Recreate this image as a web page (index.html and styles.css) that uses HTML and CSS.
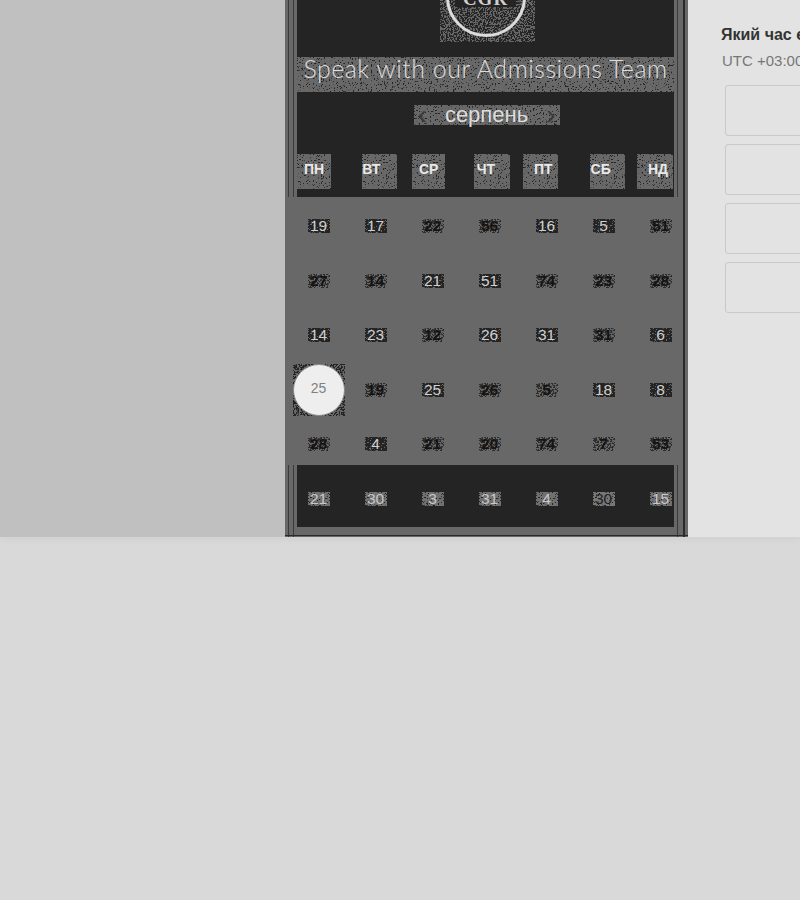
FILE: index.html
```html
<!DOCTYPE html>
<html lang="uk">
<head>
<meta charset="utf-8">
<title>Admissions</title>
<link rel="stylesheet" href="styles.css">
</head>
<body>
<svg class="defs" width="0" height="0" aria-hidden="true">
  <filter id="speckle" x="0" y="0" width="100%" height="100%" color-interpolation-filters="sRGB">
    <feTurbulence type="fractalNoise" baseFrequency="0.62" numOctaves="2" seed="4" result="n"/>
    <feColorMatrix in="n" type="matrix" values="0 0 0 0 0  0 0 0 0 0  0 0 0 0 0  14 0 0 0 -4.4" result="m"/>
    <feComposite in="SourceGraphic" in2="m" operator="in"/>
  </filter>
  <filter id="sparse" x="0" y="0" width="100%" height="100%" color-interpolation-filters="sRGB">
    <feTurbulence type="fractalNoise" baseFrequency="0.62" numOctaves="2" seed="9" result="n"/>
    <feColorMatrix in="n" type="matrix" values="0 0 0 0 0  0 0 0 0 0  0 0 0 0 0  14 0 0 0 -6.6" result="m"/>
    <feComposite in="SourceGraphic" in2="m" operator="in"/>
  </filter>
</svg>
<main class="stage">
  <aside class="side"></aside>
  <section class="cal">
    <header class="cal-head">
      <div class="logo"><span class="logo-text">CGR</span></div>
      <h1 class="title">Speak with our Admissions Team</h1>
      <div class="month">
        <span class="arrow">‹</span>
        <span class="month-name">серпень</span>
        <span class="arrow">›</span>
      </div>
      <div class="weekdays">
        <span class="wd">ПН</span><span class="wd">ВТ</span><span class="wd">СР</span><span class="wd">ЧТ</span><span class="wd">ПТ</span><span class="wd">СБ</span><span class="wd">НД</span>
      </div>
    </header>
    <div class="cal-body days">
      <span class="chip lt">19</span><span class="chip lt">17</span><span class="chip dk">22</span><span class="chip dk">56</span><span class="chip lt">16</span><span class="chip lt">5</span><span class="chip dk">51</span>
      <span class="chip dk">27</span><span class="chip dk">14</span><span class="chip lt">21</span><span class="chip lt">51</span><span class="chip dk">74</span><span class="chip dk">23</span><span class="chip dk">28</span>
      <span class="chip lt">14</span><span class="chip lt">23</span><span class="chip dk">12</span><span class="chip lt">26</span><span class="chip lt">31</span><span class="chip dk">31</span><span class="chip lt">6</span>
      <span class="sel">25</span><span class="chip dk">19</span><span class="chip lt">25</span><span class="chip dk">26</span><span class="chip dk">5</span><span class="chip lt">18</span><span class="chip lt">8</span>
      <span class="chip dk">28</span><span class="chip lt">4</span><span class="chip dk">21</span><span class="chip dk">20</span><span class="chip dk">74</span><span class="chip dk">7</span><span class="chip dk">53</span>
    </div>
    <div class="cal-foot days">
      <span class="chip fl">21</span><span class="chip fl">30</span><span class="chip fl">3</span><span class="chip fl">31</span><span class="chip fl">4</span><span class="chip fd">30</span><span class="chip fl">15</span>
    </div>
  </section>
  <section class="panel">
    <h2 class="q">Який час є найкращим для вас?</h2>
    <p class="tz">UTC +03:00</p>
    <div class="slots">
      <div class="slot"></div>
      <div class="slot"></div>
      <div class="slot"></div>
      <div class="slot"></div>
    </div>
  </section>
</main>
</body>
</html>
```
FILE: styles.css
```css
* { box-sizing: border-box; }
html, body { margin: 0; height: 100%; }
body {
  background: #d9d9d9;
  font-family: "Liberation Sans", Arial, sans-serif;
  overflow: hidden;
}
.defs { position: absolute; }
.stage {
  display: flex;
  height: 537px;
  overflow: hidden;
  box-shadow: 0 3px 6px rgba(0, 0, 0, .04);
}
.side {
  width: 285px;
  flex: none;
  background: #c0c0c0;
}
.cal {
  width: 403px;
  flex: none;
  background: #686868;
}

/* head */
.cal-head {
  position: relative;
  z-index: 0;
  height: 197px;
  display: flex;
  flex-direction: column;
  align-items: center;
  margin: 0;
  padding: 0 14px 8px 12px;
  background:
    linear-gradient(#242424, #242424) 12px 0 / 377px 100% no-repeat,
    linear-gradient(90deg, #686868 3px, #3a3a3a 3px, #3a3a3a 4px, #686868 4px, #686868 8px, #3a3a3a 8px, #3a3a3a 9px, #686868 9px, #686868 392px, #3a3a3a 392px, #3a3a3a 393px, #686868 393px, #686868 398px, #2a2a2a 398px, #2a2a2a 400px, #686868 400px);
}
.logo {
  position: relative;
  width: 80px;
  height: 80px;
  margin-top: -43px;
  flex: none;
  border: 3px solid #dcdcdc;
  border-radius: 50%;
  display: flex;
  justify-content: center;
  align-items: flex-end;
  padding-bottom: 27px;
}
.logo::before {
  content: "";
  position: absolute;
  z-index: -1;
  inset: 30px -12px -8px -9px;
  background: #686868;
  filter: url(#sparse);
}
.logo-text {
  font: bold 19px/16px "Liberation Serif", serif;
  color: #cfcfcf;
  letter-spacing: 1px;
  padding: 0 8px;
  background: #242424;
}
.title {
  position: relative;
  width: 100%;
  height: 35px;
  margin: 20px 0 0;
  font: 300 25px/23px Lato, sans-serif;
  letter-spacing: .5px;
  color: #dcdcdc;
  text-align: center;
  white-space: nowrap;
}
.title::before,
.wd::before,
.month::before {
  content: "";
  position: absolute;
  z-index: -1;
  inset: 0;
  background: #686868;
  filter: url(#speckle);
}
.month {
  position: relative;
  width: 146px;
  height: 20px;
  margin: 13px 0 0 2px;
  display: flex;
  justify-content: space-between;
  align-items: center;
  padding: 0 4px;
}
.month-name {
  font-size: 22px;
  line-height: 20px;
  color: #dcdcdc;
}
.arrow {
  font-size: 28px;
  line-height: 18px;
  color: #3a3a3a;
}
.weekdays {
  width: 100%;
  margin-top: 29px;
  display: flex;
  gap: 23.33px;
}
.wd {
  position: relative;
  flex: none;
  width: 34px;
  height: 35px;
  text-align: center;
  font-size: 14px;
  font-weight: bold;
  line-height: 30px;
  color: #e8e8e8;
}
.wd:nth-child(2)::before { left: 8px; right: -9px; }
.wd:nth-child(3)::before { right: 1px; }
.wd:nth-child(4)::before { left: 5px; right: -7px; }
.wd:nth-child(5)::before { left: -3px; right: 2px; }
.wd:nth-child(6)::before { left: 6px; right: -7px; }
.wd:nth-child(7)::before { left: -4px; right: 2px; }

/* days */
.days {
  display: grid;
  grid-template-columns: repeat(7, 57px);
  justify-items: center;
  align-items: center;
  padding-left: 5px;
}
.cal-body {
  position: relative;
  z-index: 0;
  height: 268px;
  padding-top: 22px;
  row-gap: 40.5px;
  align-content: start;
  background: linear-gradient(90deg, #686868 398px, #2a2a2a 398px, #2a2a2a 400px, #686868 400px);
}
.chip {
  position: relative;
  z-index: 0;
  width: 22px;
  height: 14px;
  font-size: 15.5px;
  line-height: 14px;
  text-align: center;
}
.chip::before {
  content: "";
  position: absolute;
  z-index: -1;
  inset: 0;
  filter: url(#speckle);
}
.lt { color: #d0d0d0; }
.lt::before { background: #242424; }
.dk { color: #141414; font-weight: bold; }
.dk::before { background: #2c2c2c; filter: url(#sparse); }
.fl { color: #c8c8c8; }
.fl::before { background: #707070; }
.fd { color: #242424; }
.fd::before { background: #777; }
.sel {
  position: relative;
  width: 52px;
  height: 52px;
  margin: -19px 0;
  border: 1px solid #8a8a8a;
  border-radius: 50%;
  background: #eeeeee;
  color: #808080;
  font-size: 14px;
  line-height: 46px;
  text-align: center;
}
.sel::before {
  content: "";
  position: absolute;
  z-index: -1;
  inset: -1px;
  background: #242424;
  filter: url(#sparse);
}
.cal-foot {
  height: 72px;
  padding-top: 27px;
  align-items: start;
  background:
    linear-gradient(#242424, #242424) 12px 0 / 377px 62px no-repeat,
    linear-gradient(#2a2a2a, #2a2a2a) 0 70px / 100% 1px no-repeat,
    linear-gradient(90deg, #686868 3px, #3a3a3a 3px, #3a3a3a 4px, #686868 4px, #686868 8px, #3a3a3a 8px, #3a3a3a 9px, #686868 9px, #686868 392px, #3a3a3a 392px, #3a3a3a 393px, #686868 393px, #686868 398px, #2a2a2a 398px, #2a2a2a 400px, #686868 400px);
}

/* right panel */
.panel {
  flex: none;
  width: 420px;
  background: #e3e3e3;
  padding: 26px 0 0 33px;
}
.q {
  margin: 0;
  font-size: 16px;
  line-height: 18px;
  font-weight: bold;
  color: #333;
  white-space: nowrap;
}
.tz {
  margin: 8px 0 0 1px;
  font-size: 15px;
  line-height: 17px;
  color: #777;
}
.slots {
  margin: 16px 0 0 4px;
  display: flex;
  flex-direction: column;
  gap: 8px;
}
.slot {
  width: 340px;
  height: 51px;
  border: 1px solid #c9c9c9;
  border-radius: 3px;
}
```
